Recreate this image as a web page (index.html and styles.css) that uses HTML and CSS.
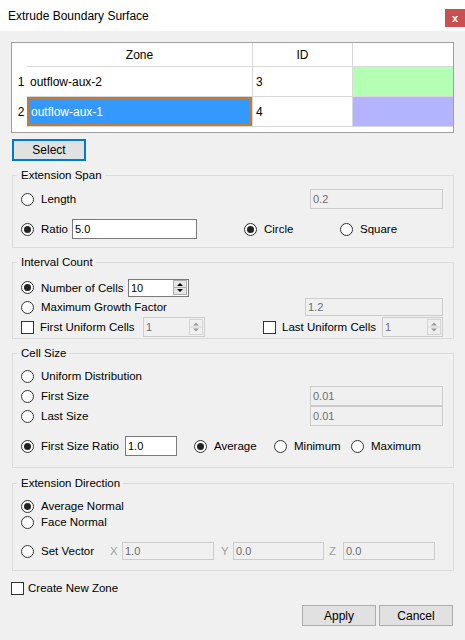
FILE: index.html
```html
<!DOCTYPE html>
<html>
<head>
<meta charset="utf-8">
<link rel="stylesheet" href="styles.css">
</head>
<body>
<div class="dialog">
  <div class="titlebar">
    <div class="title">Extrude Boundary Surface</div>
    <div class="close">x</div>
  </div>

  <div class="grid-table">
    <div class="c rh"></div>
    <div class="c hd zone-col">Zone</div>
    <div class="c hd">ID</div>
    <div class="c hd last"></div>

    <div class="c rh num">1</div>
    <div class="c zone-col txt">outflow-aux-2</div>
    <div class="c txt">3</div>
    <div class="c last green"></div>

    <div class="c rh num">2</div>
    <div class="c zone-col sel"><span class="focus">outflow-aux-1</span></div>
    <div class="c txt">4</div>
    <div class="c last purple"></div>
  </div>

  <div class="select-btn">Select</div>

  <fieldset class="grp g1">
    <legend>Extension Span</legend>
    <div class="row h20">
      <label class="opt"><span class="rb"></span>Length</label>
      <div class="tb dis w133 push">0.2</div>
    </div>
    <div class="row h20 mt10">
      <label class="opt w51"><span class="rb on"></span>Ratio</label>
      <div class="tb w125">5.0</div>
      <label class="opt ml47 w96"><span class="rb on"></span>Circle</label>
      <label class="opt"><span class="rb"></span>Square</label>
    </div>
  </fieldset>

  <fieldset class="grp g2">
    <legend>Interval Count</legend>
    <div class="row h19">
      <label class="opt w107"><span class="rb on"></span>Number of Cells</label>
      <div class="tb spin w61 h18"><span class="val">10</span>
        <svg class="arrows" width="14" height="15" viewBox="0 0 14 15"><rect x="0.5" y="0.5" width="13" height="14" fill="#e5e5e5" stroke="#adadad"/><line x1="1" y1="7.5" x2="13" y2="7.5" stroke="#adadad"/><path d="M4 6 L7 3 L10 6 Z" fill="#000"/><path d="M4 9 L7 12 L10 9 Z" fill="#000"/></svg>
      </div>
    </div>
    <div class="row h20">
      <label class="opt"><span class="rb"></span>Maximum Growth Factor</label>
      <div class="tb dis w138 h18 push">1.2</div>
    </div>
    <div class="row h20">
      <label class="opt w122 gap6"><span class="cb"></span>First Uniform Cells</label>
      <div class="tb dis spin w62"><span class="val">1</span>
        <svg class="arrows" width="14" height="16" viewBox="0 0 14 16"><rect x="0.5" y="0.5" width="13" height="15" fill="#f0f0f0" stroke="#d5d5d5"/><line x1="1" y1="8" x2="13" y2="8" stroke="#d5d5d5"/><path d="M4 6.5 L7 3.5 L10 6.5 Z" fill="#9a9a9a"/><path d="M4 9.5 L7 12.5 L10 9.5 Z" fill="#9a9a9a"/></svg>
      </div>
      <label class="opt ml58 w119 gap6"><span class="cb"></span>Last Uniform Cells</label>
      <div class="tb dis spin w61"><span class="val">1</span>
        <svg class="arrows" width="14" height="16" viewBox="0 0 14 16"><rect x="0.5" y="0.5" width="13" height="15" fill="#f0f0f0" stroke="#d5d5d5"/><line x1="1" y1="8" x2="13" y2="8" stroke="#d5d5d5"/><path d="M4 6.5 L7 3.5 L10 6.5 Z" fill="#9a9a9a"/><path d="M4 9.5 L7 12.5 L10 9.5 Z" fill="#9a9a9a"/></svg>
      </div>
    </div>
  </fieldset>

  <fieldset class="grp g3">
    <legend>Cell Size</legend>
    <div class="row h20">
      <label class="opt"><span class="rb"></span>Uniform Distribution</label>
    </div>
    <div class="row h20">
      <label class="opt"><span class="rb"></span>First Size</label>
      <div class="tb dis w133 push">0.01</div>
    </div>
    <div class="row h20">
      <label class="opt"><span class="rb"></span>Last Size</label>
      <div class="tb dis w133 push">0.01</div>
    </div>
    <div class="row h20 mt10">
      <label class="opt w104"><span class="rb on"></span>First Size Ratio</label>
      <div class="tb w52">1.0</div>
      <label class="opt ml17 w80"><span class="rb on"></span>Average</label>
      <label class="opt w77"><span class="rb"></span>Minimum</label>
      <label class="opt"><span class="rb"></span>Maximum</label>
    </div>
  </fieldset>

  <fieldset class="grp g4">
    <legend>Extension Direction</legend>
    <div class="row h16">
      <label class="opt"><span class="rb on"></span>Average Normal</label>
    </div>
    <div class="row h16">
      <label class="opt"><span class="rb"></span>Face Normal</label>
    </div>
    <div class="row h18 mt12">
      <label class="opt w89"><span class="rb"></span>Set Vector</label>
      <span class="axis w12">X</span>
      <div class="tb dis w92 h18">1.0</div>
      <span class="axis ml7 w12">Y</span>
      <div class="tb dis w91 h18">0.0</div>
      <span class="axis ml5 w14">Z</span>
      <div class="tb dis w92 h18">0.0</div>
    </div>
  </fieldset>

  <div class="row h16 create">
    <label class="opt gap4"><span class="cb"></span>Create New Zone</label>
  </div>

  <div class="buttons">
    <div class="btn">Apply</div>
    <div class="btn">Cancel</div>
  </div>
</div>
</body>
</html>
```

FILE: styles.css
```css
html, body {
  margin: 0;
  padding: 0;
  background: #f0f0f0;
}
body {
  font-family: "Liberation Sans", Arial, sans-serif;
  font-size: 11.5px;
  color: #000;
}
.dialog {
  width: 465px;
  height: 640px;
  background: #f0f0f0;
  overflow: hidden;
}
.titlebar {
  height: 31px;
  background: #fff;
  display: flex;
  align-items: flex-start;
}
.title {
  font-size: 12px;
  line-height: 16px;
  margin: 8px 0 0 8px;
}
.close {
  margin-left: auto;
  margin-top: 9px;
  width: 20px;
  height: 18px;
  background: #c75050;
  color: #fff;
  font-weight: bold;
  font-size: 11px;
  display: flex;
  align-items: center;
  justify-content: center;
}

/* table */
.grid-table {
  margin: 11px 0 0 11px;
  width: 441px;
  height: 89px;
  border: 1px solid #a0a0a0;
  background: #fff;
  display: grid;
  grid-template-columns: 15px 226px 100px 100px;
  grid-template-rows: 24px 30px 30px;
  font-size: 12px;
}
.c {
  box-sizing: border-box;
  border-right: 1px solid #d8d8d8;
  border-bottom: 1px solid #d8d8d8;
  display: flex;
  align-items: center;
}
.c.rh {
  border-right: none;
  border-bottom: none;
  justify-content: center;
  padding-left: 3px;
}
.c.hd {
  justify-content: center;
}
.c.last {
  border-right: none;
}
.c.txt {
  padding-left: 3px;
}
.green { background: #b3ffb3; }
.purple { background: #b3b3ff; }
.c.sel {
  background: #3399ff;
  color: #fff;
  padding: 1px;
  align-items: stretch;
}
.focus {
  flex: 1;
  display: flex;
  align-items: center;
  padding-left: 2px;
  border: 1px dotted #c8823c;
}

.select-btn {
  margin: 6px 0 0 12px;
  width: 74px;
  height: 22px;
  box-sizing: border-box;
  border: 2px solid #0078d7;
  background: #e1e1e1;
  font-size: 12px;
  display: flex;
  align-items: center;
  justify-content: center;
}

/* groups */
.grp {
  margin: 7px 11px 0 12px;
  border: 1px solid #dcdcdc;
  padding: 0 10px 0 8px;
  min-width: 0;
}
.grp legend {
  line-height: 14px;
  padding: 0 3px 0 4px;
  margin-left: -4px;
}
.g1 { padding-top: 7px; padding-bottom: 8px; }
.g2 { padding-top: 9px; padding-bottom: 1px; }
.g3 { padding-top: 6px; padding-bottom: 11px; }
.g4 { padding-top: 8px; padding-bottom: 10px; margin-top: 8px; }

.row {
  display: flex;
  align-items: center;
}
.h16 { height: 16px; }
.h18 { height: 18px; }
.h19 { height: 19px; }
.h20 { height: 20px; }
.mt10 { margin-top: 10px; }
.mt12 { margin-top: 12px; }

.opt {
  display: flex;
  align-items: center;
  gap: 7px;
  flex: none;
  white-space: nowrap;
}
.gap4 { gap: 4px; }
.gap6 { gap: 6px; }
.rb {
  width: 13px;
  height: 13px;
  box-sizing: border-box;
  border: 1px solid #333;
  border-radius: 50%;
  background: #fff;
  display: inline-flex;
  align-items: center;
  justify-content: center;
  flex: none;
}
.rb.on::after {
  content: "";
  width: 7px;
  height: 7px;
  border-radius: 50%;
  background: #222;
}
.cb {
  width: 13px;
  height: 13px;
  box-sizing: border-box;
  border: 1px solid #333;
  background: #fff;
  flex: none;
}

.tb {
  height: 20px;
  box-sizing: border-box;
  border: 1px solid #7a7a7a;
  background: #fff;
  font-size: 11px;
  padding-left: 2px;
  display: flex;
  align-items: center;
  flex: none;
}
.tb.h18 { height: 18px; }
.tb.dis {
  border-color: #cccccc;
  background: #f0f0f0;
  color: #6d6d6d;
}
.spin {
  justify-content: space-between;
  padding-right: 1px;
}
.arrows { flex: none; }

.push { margin-left: auto; }
.w12 { width: 12px; }
.w14 { width: 14px; }
.w51 { width: 51px; }
.w52 { width: 52px; }
.w61 { width: 61px; }
.w62 { width: 62px; }
.w77 { width: 77px; }
.w80 { width: 80px; }
.w89 { width: 89px; }
.w91 { width: 91px; }
.w92 { width: 92px; }
.w96 { width: 96px; }
.w104 { width: 104px; }
.w107 { width: 107px; }
.w119 { width: 119px; }
.w122 { width: 122px; }
.w125 { width: 125px; }
.w133 { width: 133px; }
.w138 { width: 138px; }
.ml5 { margin-left: 5px; }
.ml7 { margin-left: 7px; }
.ml17 { margin-left: 17px; }
.ml47 { margin-left: 47px; }
.ml58 { margin-left: 58px; }

.axis {
  color: #a0a0a0;
  flex: none;
}

.create {
  margin: 9px 0 0 11px;
}

.buttons {
  display: flex;
  justify-content: flex-end;
  gap: 3px;
  margin: 9px 12px 0 0;
}
.btn {
  width: 74px;
  height: 21px;
  box-sizing: border-box;
  border: 1px solid #adadad;
  background: #e1e1e1;
  font-size: 12px;
  display: flex;
  align-items: center;
  justify-content: center;
}
```
